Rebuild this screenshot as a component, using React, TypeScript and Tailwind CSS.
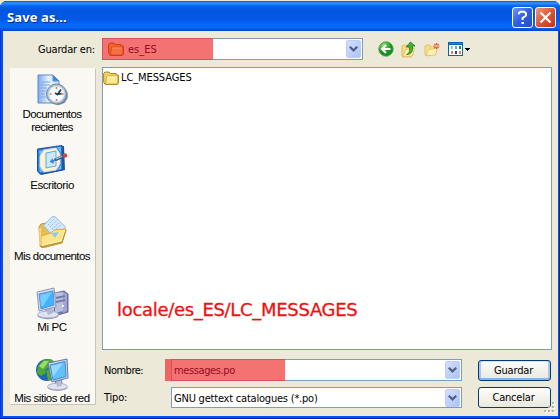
import React from "react";

const ui = "font-['DejaVu_Sans_Condensed','DejaVu_Sans',sans-serif] [font-stretch:condensed]";
const arial = "font-['Liberation_Sans',Arial,sans-serif]";

function DropButton() {
  return (
    <span className="flex h-[18px] w-[15px] shrink-0 items-center justify-center rounded-[2px] border border-[#bccdf8] bg-linear-to-br from-[#d3dffd] to-[#adc3f7]">
      <svg width="9" height="6" viewBox="0 0 9 6">
        <path d="M.8.8 4.5 4.4 8.2.8" fill="none" stroke="#4d6185" strokeWidth="2.2" />
      </svg>
    </span>
  );
}

function Folder({ red = false }: { red?: boolean }) {
  return (
    <svg width="16" height="14" viewBox="0 0 16 14" className="shrink-0">
      <path
        d="M.6 11V2.5L2 1h4l1.5 1.5h5.5l1 1.5H15.4v8.5l-1 1H2.2z"
        fill={red ? "#ef6427" : "#f3cf5b"}
        stroke={red ? "#d23a1c" : "#a98628"}
      />
      <path
        d="m2.6 12.5.8-6.5 1-1h10.4v7l-1 1H3.1z"
        fill={red ? "#f47040" : "#ffe98c"}
        stroke={red ? "#d6421d" : "#c29a30"}
        strokeWidth=".8"
      />
      <path d="M4.4 6h9.4" stroke={red ? "#f98b65" : "#fffbd8"} />
    </svg>
  );
}

function RecentIcon() {
  return (
    <svg width="32" height="32" viewBox="0 0 32 32">
      <defs>
        <linearGradient id="page" x2="1">
          <stop stopColor="#7da8ed" />
          <stop offset=".5" stopColor="#e6f2ff" />
          <stop offset="1" stopColor="#c4defb" />
        </linearGradient>
      </defs>
      <path d="M2 1h15l6 6v22H2z" fill="url(#page)" stroke="#6288ce" />
      <path d="M17 1v6h6" fill="#3c83dc" stroke="#5f96df" />
      <path d="M5 8h9M5 11h9M5 14h6M5 17h5M5 20h4M5 23h5" stroke="#79a8e8" />
      <ellipse cx="22" cy="21.5" rx="10" ry="9.7" fill="#768da5" />
      <circle cx="20.5" cy="20" r="10" fill="#a9bccd" stroke="#72899e" />
      <circle cx="20.5" cy="20" r="7.8" fill="#f4faff" stroke="#d5e3ef" />
      <path d="M20.5 13v2m0 10v2M13.5 20h2m10 0h2" stroke="#eb713c" strokeWidth="1.5" />
      <path d="m19 19 2.5 1.5 3.5-5M20.5 20.5l5-.8" fill="none" stroke="#253f55" strokeWidth="1.7" />
    </svg>
  );
}

function DesktopIcon() {
  return (
    <svg width="32" height="32" viewBox="0 0 32 32">
      <path d="M3 6 28 2l1 24-24 5-3-4z" fill="#26519b" />
      <path d="m1.5 5 24.500-3.500L27 26 4 30l-2.500-3z" fill="#2d83dc" stroke="#1b4e9e" />
      <path d="m3 7 5-1-4 6zm18-4 4 0 0 6zM3 21l5 6-4 1zm18 5 4-5v4z" fill="#71baf8" />
      <path d="m8 6 12-2 4 6v10l-4 6-12 2-4-6V12z" fill="#fff3cf" stroke="#d6dddf" />
      <path d="m10 9 10-2v15l-10 2z" fill="#cae8ff" stroke="#65a6e5" />
      <path d="m23 12-6 3.500v-2.500l-4 5 5 2.500v-2.500l6-3z" fill="#3f87d6" stroke="#f6fcff" strokeWidth=".6" />
      <path d="m19 16 8-3.500" stroke="#355a88" strokeWidth="3" />
      <path d="m20 15 6-2.500" stroke="#a7d7f7" />
      <circle cx="29" cy="11.500" r="2.300" fill="#cf493d" />
    </svg>
  );
}

function DocumentsIcon() {
  return (
    <svg width="32" height="32" viewBox="0 0 32 32">
      <path d="M4 30 3 11l2-3 5-1 3 3 5 1 12 3-4 13-20 5z" fill="#e8bd50" stroke="#c39732" />
      <path d="M7.500 9.500 16 .8h3L29.500 11 20 24z" fill="#d3e9fc" stroke="#91b7e6" />
      <path d="m12 9 6-6M14 11l7-7M16 13l7-6M18 15l7-6" stroke="#84bdf1" strokeDasharray="1.500 1" />
      <path d="m5 20 10-3 3-3 12-1-4 13-21 5z" fill="#ffe589" stroke="#dba93b" />
      <path d="m15 17 8-1-4 6z" fill="#8dc9f5" />
      <path d="M4 12v17M6 29l19-4 4-11" fill="none" stroke="#fff5bd" />
      <path d="m5 31 21-5 4-12" fill="none" stroke="#ba9037" />
    </svg>
  );
}

function ComputerIcon() {
  return (
    <svg width="33" height="33" viewBox="0 0 33 33">
      <path d="m19 6 9-2 4 3v18l-10 3-4-3z" fill="#7479b5" stroke="#626b9f" />
      <path d="m19 6 8-1 0 19-8 2z" fill="#bdc1dd" />
      <path d="m27 5 4 2v17l-4 2z" fill="#a1a6cf" />
      <path d="m20 11 9-2m-9 6 9-2" stroke="#737aa7" strokeWidth="2" />
      <circle cx="27" cy="19" r="1" fill="#fff" />
      <path d="m9 22 7-1 2 7-7 1z" fill="#777fab" />
      <ellipse cx="12" cy="28.5" rx="10.5" ry="3.7" fill="#7f88b1" />
      <ellipse cx="12" cy="27.5" rx="10.5" ry="3.4" fill="#dde3ef" stroke="#abb3cf" />
      <path d="m10 22 6-2 1 6-5 2z" fill="#afb9d4" />
      <path d="m1 5 17-4 2 19-17 4z" fill="#d7dceb" stroke="#8d99b8" />
      <path d="m3 7 14-3 1 14-13 4z" fill="#43b4fa" stroke="#5b92db" />
      <path d="m4 8 12-3-9 14H5z" fill="#8edcff" opacity=".65" />
    </svg>
  );
}

function NetworkIcon() {
  return (
    <svg width="33" height="33" viewBox="0 0 33 33">
      <circle cx="11" cy="12" r="11" fill="#1d65bd" />
      <path d="M2 8 7 2l8-1 3 3-6 2 1 3-4 3 1 3-5 3-4-3zM10 12l6-2 5 3-4 7-5 3z" fill="#4fa838" />
      <path d="M3 8 8 3l5 0-3 4-3 4z" fill="#9bdc65" />
      <path d="m19 23 7-1 1 7-8 1z" fill="#7d84ab" />
      <ellipse cx="21.500" cy="29.500" rx="10" ry="3.200" fill="#868da9" />
      <ellipse cx="21.500" cy="28.500" rx="10" ry="3.200" fill="#e1e4f0" stroke="#aaafc8" />
      <path d="m20 23 5-1 1 6-5 1z" fill="#b5bdd4" />
      <path d="m12 5 19-4 1 19-16 4z" fill="#c8d5e8" stroke="#687c9c" />
      <path d="m14 7 15-3.500 1 15-13 3.500z" fill="#62c0ff" stroke="#4e8bc6" />
      <path d="m15 8 12-3-10 14z" fill="#b2e6ff" opacity=".65" />
    </svg>
  );
}

function BackIcon() {
  return (
    <svg width="16" height="16" viewBox="0 0 16 16">
      <defs>
        <radialGradient id="back" cx=".35" cy=".25">
          <stop stopColor="#94df7a" />
          <stop offset=".65" stopColor="#3fb13a" />
          <stop offset="1" stopColor="#198d20" />
        </radialGradient>
      </defs>
      <circle cx="8" cy="8" r="7.2" fill="url(#back)" stroke="#38a03a" strokeWidth=".8" />
      <path d="M12.5 8H4m4-4L4 8l4 4" fill="none" stroke="white" strokeWidth="2" />
    </svg>
  );
}

function UpIcon() {
  return (
    <svg width="15" height="17" viewBox="0 0 15 17">
      <path d="M1 15V5l2-1h3l1 2h5v7l-2 3H2z" fill="#f8dc7c" stroke="#d8b350" strokeWidth=".8" />
      <path d="m2 15.500 2.500-7L13.500 7l-2 8z" fill="#fff1ac" stroke="#dfbb55" strokeWidth=".8" />
      <path d="M5.500 13.500c3-1 3.500-4 2.700-7.500H5l4.500-5L14 5h-2.500c.6 5-1 8.500-6 8.500z" fill="#43ae38" stroke="#1f7d22" strokeWidth=".8" />
    </svg>
  );
}

function NewFolderIcon() {
  return (
    <svg width="16" height="15" viewBox="0 0 16 15">
      <path d="M1 13V4l2-1h3l1 2h5v6l-9 3z" fill="#f8dc83" stroke="#dcb95d" strokeWidth=".8" />
      <path d="M2 13.500 4.500 7.500 13.500 6l-2 7z" fill="#fff1b0" stroke="#dfbd62" strokeWidth=".8" />
      <path d="M12.500 1v6M9.500 4h6M10.400 1.900l4.200 4.200m0-4.200-4.200 4.200" stroke="#f0502e" strokeWidth="1.2" />
      <circle cx="12.500" cy="4" r="1.300" fill="#ffc890" />
    </svg>
  );
}

function ViewIcon() {
  return (
    <svg width="23" height="14" viewBox="0 0 23 14" shapeRendering="crispEdges">
      <path d="M0 0h15v14H0z" fill="#0861b9" />
      <path d="M1 3h13v10H1z" fill="#fff" />
      <path d="M1 1h13v1H1z" fill="#2586e8" />
      <path d="M3 4h2v3H3z" fill="#b4b6c1" />
      <path d="M7 4h2v3H7z" fill="#7799bc" />
      <path d="M11 4h2v3h-2z" fill="#218a35" />
      <path d="M3 9h2v3H3z" fill="#ef7a61" />
      <path d="M7 9h2v3H7z" fill="#18449c" />
      <path d="M11 9h2v3h-2z" fill="#c59b22" />
      <path d="M17 6h5v1h-1v1h-1v1h-1V8h-1V7h-1z" fill="#000" />
    </svg>
  );
}

function SizeGrip() {
  return (
    <svg width="12" height="12" viewBox="0 0 12 12" className="absolute right-[2px] bottom-[2px]" shapeRendering="crispEdges">
      <path d="M9 1h2v2H9zM5 5h2v2H5zM9 5h2v2H9zM1 9h2v2H1zM5 9h2v2H5zM9 9h2v2H9z" fill="#fff" />
      <path d="M8 0h2v2H8zM4 4h2v2H4zM8 4h2v2H8zM0 8h2v2H0zM4 8h2v2H4zM8 8h2v2H8z" fill="#b8b4a3" />
    </svg>
  );
}

const places = [
  { icon: <RecentIcon />, label: <>Documentos<br />recientes</>, box: "h-[70px] pt-[5px]", text: "pt-px tracking-[-0.55px]" },
  { icon: <DesktopIcon />, label: "Escritorio", box: "h-[71px] pt-[5px]", text: "pt-[2px] tracking-[-0.42px]" },
  { icon: <DocumentsIcon />, label: "Mis documentos", box: "h-[72px] pt-[6px]", text: "pt-px tracking-[-0.55px]" },
  { icon: <ComputerIcon />, label: "Mi PC", box: "h-[70px] pt-[5px]", text: "pt-px tracking-[-0.4px]" },
  { icon: <NetworkIcon />, label: "Mis sitios de red", box: "h-[51px] pt-[6px]", text: "pt-px tracking-[-0.45px]" },
];

function TitleBar() {
  return (
    <header className="flex h-[30px] items-center rounded-t-[7px] bg-[linear-gradient(180deg,#0754c8_0px,#3795ff_2px,#0765e9_5px,#0256df_9px,#0258e5_18px,#026afe_24px,#0265f5_27px,#003fce_30px)] pt-[3px] pr-[4px] pl-[7px]">
      <h1 className="flex-1 pb-px font-['Noto_Sans',sans-serif] text-[13px] leading-[18px] font-bold tracking-[0.1px] text-white [text-shadow:1px_1px_#092b83]">
        Save as...
      </h1>
      <div className="flex gap-[2px]">
        <button className="flex size-[21px] items-center justify-center rounded-[3px] border border-white bg-linear-to-br from-[#7095f5] via-[#315ee0] to-[#244cc7]">
          <svg width="13" height="15" viewBox="0 0 13 15">
            <path d="M3 4.3V3l1.4-1.3h3.7L10 3.3v2.3L6.6 8v2" fill="none" stroke="white" strokeWidth="2" />
            <path d="M5.5 12h2.4v2H5.5z" fill="white" />
          </svg>
        </button>
        <button className="flex size-[21px] items-center justify-center rounded-[3px] border border-white bg-linear-to-br from-[#ed967c] via-[#dd5632] to-[#bd3217]">
          <svg width="13" height="13" viewBox="0 0 13 13">
            <path d="m1.5 1.5 10 10m0-10-10 10" stroke="white" strokeWidth="2.2" />
          </svg>
        </button>
      </div>
    </header>
  );
}

export default function App() {
  return (
    <div className="h-[419px] w-[560px] overflow-hidden bg-[#ece9d8] pt-px">
      <main className="flex h-[418px] flex-col rounded-t-[7px] bg-[#0451ee] shadow-[inset_0_-1px_#001d9c,inset_1px_0_#0831d9,inset_-1px_0_#0029b5]">
        <TitleBar />
        <div className="relative mr-[2px] mb-[3px] ml-[3px] flex min-h-0 flex-1 flex-col bg-[#ece9d8]">
          <div className="flex h-[36px] items-start pt-[7px]">
            <label className={`w-[99px] pl-[35px] text-[11px] leading-[23px] tracking-[-0.2px] whitespace-nowrap ${ui}`}>Guardar en:</label>
            <div className="flex h-[22px] w-[261px] items-center border border-[#7f9db9] bg-white pr-px">
              <div className={`-my-px -ml-px flex h-[22px] w-[111px] items-center border border-r-0 border-[#d55262] bg-[#f37272] pl-[5px] text-[11px] leading-[20px] text-[#960c20] ${ui}`}>
                <Folder red />
                <span className="ml-[4px] pt-px">es_ES</span>
              </div>
              <span className="flex-1" />
              <DropButton />
            </div>
            <div className="flex h-[22px] items-center pl-[15px]">
              <BackIcon />
              <span className="ml-[7px]"><UpIcon /></span>
              <span className="ml-[8px]"><NewFolderIcon /></span>
              <span className="ml-[8px]"><ViewIcon /></span>
            </div>
          </div>
          <div className="flex min-h-0 flex-1">
            <nav className="mt-px ml-[7px] h-[337px] w-[86px] shrink-0 border border-t-[#faf9f2] border-r-[#c8c5b8] border-b-[#c8c5b8] border-l-[#faf9f2] bg-[#f9f8f3] pr-[2px]">
              {places.map((place, index) => (
                <div key={index} className={`flex flex-col items-center ${place.box}`}>
                  <span className="flex h-[33px] shrink-0">{place.icon}</span>
                  <span className={`text-center text-[11.5px] leading-[13px] whitespace-nowrap ${arial} ${place.text}`}>{place.label}</span>
                </div>
              ))}
            </nav>
            <section className="ml-[6px] w-[450px]">
              <div className="flex h-[283px] flex-col border border-[#7f9db9] bg-white">
                <div className={`flex h-[20px] items-center text-[11px] ${ui}`}>
                  <Folder />
                  <span className="ml-[2px] pt-px tracking-[-0.1px]">LC_MESSAGES</span>
                </div>
                <p className="mt-[210px] ml-[14px] font-['DejaVu_Sans',sans-serif] text-[18px] leading-[24px] tracking-[-0.31px] text-[#ee1111] [-webkit-text-stroke:0.3px_#ee1111]">locale/es_ES/LC_MESSAGES</p>
              </div>
              <div className="flex pt-[9px]">
                <label className={`w-[63px] pl-[2px] text-[11px] leading-[23px] tracking-[-0.5px] ${ui}`}>Nombre:</label>
                <div className="flex h-[22px] w-[297px] items-center">
                  <div className="h-[22px] w-[6px] bg-[#ee665e]" />
                  <div className="flex h-[22px] flex-1 items-center border border-[#7f9db9] bg-white pr-px">
                    <div className={`-my-px -ml-px h-[22px] w-[114px] border border-r-0 border-[#d55262] bg-[#f37272] pl-[2px] text-[11px] leading-[21px] tracking-[-0.38px] text-[#960c20] ${ui}`}>messages.po</div>
                    <span className="flex-1" />
                    <DropButton />
                  </div>
                </div>
                <button className={`mt-px ml-[16px] h-[21px] w-[73px] rounded-[3px] border border-[#003c74] bg-linear-to-b from-[#fcfcfa] to-[#e9e9df] pr-[2px] text-[11px] leading-[19px] tracking-[-0.15px] shadow-[inset_0_-2px_#8fb0ee,inset_2px_0_#a9c3f3,inset_-2px_0_#a9c3f3,inset_0_1px_#cee7ff] ${ui}`}>Guardar</button>
              </div>
              <div className="flex pt-[5px]">
                <label className={`w-[69px] pl-[2px] text-[11px] leading-[21px] tracking-[-0.2px] ${ui}`}>Tipo:</label>
                <div className="flex h-[21px] w-[291px] items-center border border-[#7f9db9] bg-white pr-px pl-[2px]">
                  <span className={`flex-1 pt-px text-[11px] leading-[19px] tracking-[-0.21px] whitespace-nowrap ${ui}`}>GNU gettext catalogues (*.po)</span>
                  <DropButton />
                </div>
                <button className={`ml-[16px] h-[21px] w-[73px] rounded-[3px] border border-[#003c74] bg-linear-to-b from-[#fdfdfb] to-[#eae9df] pr-[2px] text-[11px] leading-[19px] tracking-[-0.2px] ${ui}`}>Cancelar</button>
              </div>
            </section>
          </div>
          <SizeGrip />
        </div>
      </main>
    </div>
  );
}
